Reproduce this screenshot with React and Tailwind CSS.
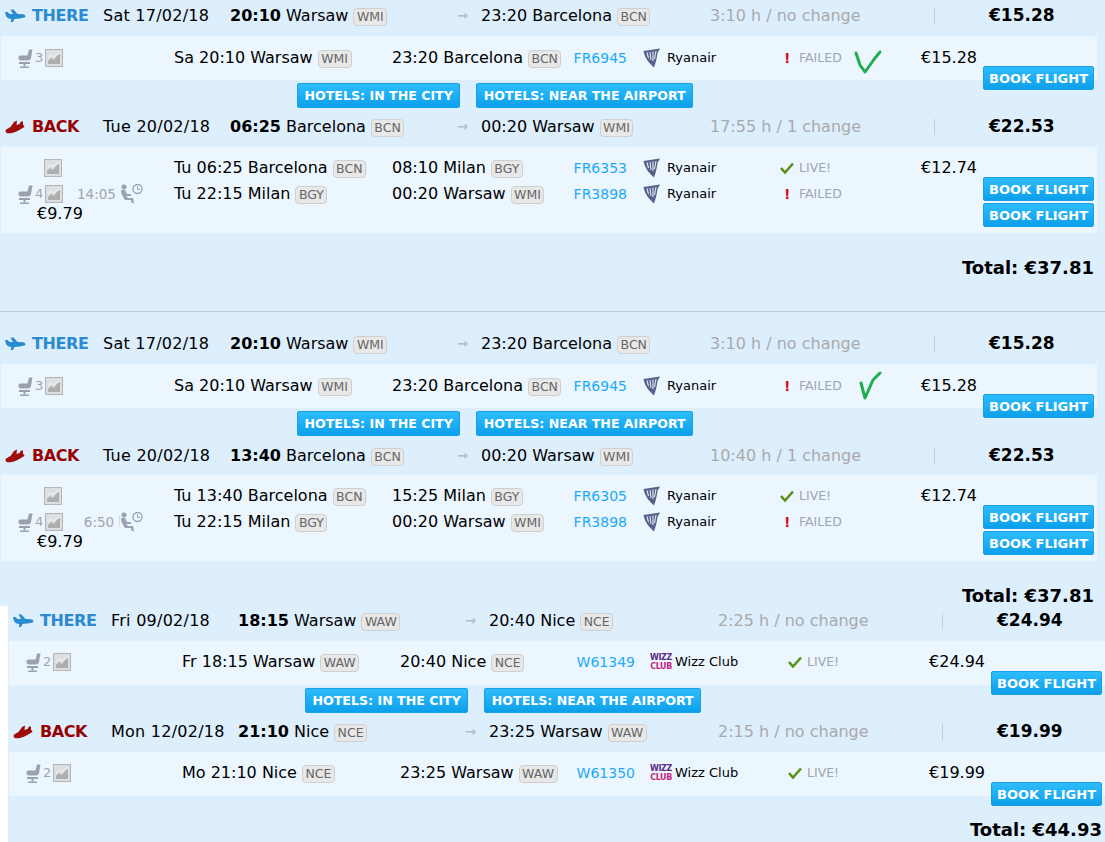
import React from 'react';

const PlaneIcon = ({ back }) => (
  <svg width="21" height="14" viewBox="0 0 21 14" className="shrink-0">
    {back ? (
      <path d="M0.5 11.5 C0.5 9 3 8.5 5.5 7 L9 2 L12 0.5 L11.5 5 L14.5 4 L16 1.5 L18 1.5 L18 5 C19.5 5.5 20 7 18.5 7.5 C15 10 10 12.5 7 13 C4 13.5 1 13.5 0.5 11.5 Z" fill="#a00d0d" />
    ) : (
      <path d="M0 3 L2.5 3 L4.5 5 L8 5 L5.5 0.5 L8.5 0.5 L12.5 5 L18 5.2 C20.5 5.5 21 8 19.5 8.6 C17 9.6 12 9.6 9.5 10 L8 13 L5.8 13 L6.3 10 C4 10 2 9 1 7 Z" fill="#2a8bd0" />
    )}
  </svg>
);

const SeatIcon = () => (
  <svg width="15" height="19" viewBox="0 0 15 19" className="shrink-0">
    <path d="M11 0.5 L14.5 0.5 L13 9 C12.8 10.5 11.5 11.5 10 11.5 L3 11.5 C1 11.5 0.5 10 0.5 8.5 C0.5 7 1.5 6.5 3 6.5 L9.5 6.5 Z" fill="#9aa3ad" />
    <rect x="1" y="13" width="11" height="2" fill="#9aa3ad" />
    <rect x="5.5" y="15" width="2" height="2.5" fill="#9aa3ad" />
    <rect x="2" y="17.5" width="9" height="1.5" fill="#9aa3ad" />
  </svg>
);

const ChartIcon = () => (
  <svg width="18" height="18" viewBox="0 0 18 18" className="shrink-0">
    <rect x="0.5" y="0.5" width="17" height="17" fill="#dcdfe2" stroke="#b5b5b5" />
    <path d="M3 12 L6 9 L9 11 L12 7 L15 5 L15 15 L3 15 Z" fill="#aeaeae" />
    <path d="M3 9 L6 6 L9 8 L12 5 L15 3" fill="none" stroke="#f2f4f6" />
  </svg>
);

const LayoverIcon = () => (
  <svg width="24" height="20" viewBox="0 0 24 20" className="shrink-0 bg-[#ebf6ff]">
    <circle cx="4" cy="3" r="2.5" fill="#9aa3ad" />
    <path d="M1 6 L5 6 L7 10 L11 10 L11 12 L6 12 L8 14 L13 14 L14 19 L11.5 19 L11 16 L5 16 L1.5 10 Z" fill="#9aa3ad" />
    <circle cx="17.5" cy="5" r="4.5" fill="none" stroke="#9aa3ad" strokeWidth="1.3" />
    <path d="M17.5 2.5 L17.5 5.5 L20 5.5" fill="none" stroke="#9aa3ad" />
  </svg>
);

const RyanairLogo = () => (
  <svg width="18" height="20" viewBox="0 0 18 20" className="shrink-0">
    <path d="M0.5 3 L17 0.5 L14.5 5 C14 10 12.5 15 11 19.5 C7 16 2 11 0.5 3 Z" fill="#55628a" />
    <path d="M4 4.5 L5.5 10 M7 4 L8 12 M10 3.5 L10 13 M13 3 L11.5 11" stroke="#e3e9f4" strokeWidth="1.1" fill="none" />
  </svg>
);

const WizzLogo = () => (
  <div className="flex w-[20px] shrink-0 flex-col items-center text-[8px] leading-[9px] font-bold tracking-[-0.4px]">
    <span className="text-[#5b2a82]">WIZZ</span>
    <span className="text-[#c6257e]">CLUB</span>
  </div>
);

const Badge = ({ children }) => (
  <span className="ml-[5px] inline-block rounded-[4px] border border-[#cfcfcf] bg-[#e8e8e8] px-[2.5px] text-[12.5px] leading-[16px] text-[#666]">
    {children}
  </span>
);

const HeaderRow = ({ back, date, time, from, fromCode, to, toCode, duration, price, height }) => (
  <div className={`flex items-center whitespace-nowrap text-[16px] text-black ${height}`}>
    <div className="flex w-[32px] shrink-0 pl-[5px]">
      <PlaneIcon back={back} />
    </div>
    <div className={`w-[71px] shrink-0 font-bold tracking-[-0.4px] ${back ? 'text-[#990000]' : 'text-[#2a8bd0]'}`}>
      {back ? 'BACK' : 'THERE'}
    </div>
    <div className="w-[127px] shrink-0 tracking-[0.25px]">{date}</div>
    <div className="w-[227px] shrink-0">
      <span className="font-bold">{time}</span> {from}
      <Badge>{fromCode}</Badge>
    </div>
    <div className="w-[24px] shrink-0 text-[13px] font-bold text-[#b4bec8]">→</div>
    <div className="w-[229px] shrink-0">
      {to}
      <Badge>{toCode}</Badge>
    </div>
    <div className="w-[224px] shrink-0 text-[#aaa]">{duration}</div>
    <div className="h-[16px] w-[55px] shrink-0 border-l border-[#c5cdd4]" />
    <div className="text-[17px] font-bold">{price}</div>
  </div>
);

const Status = ({ live }) => (
  <div className="flex w-[76px] shrink-0 items-center text-[12.5px] text-[#a0a6ad]">
    <div className="flex w-[19px] shrink-0">
      {live ? (
        <svg width="14" height="12" viewBox="0 0 14 12">
          <path d="M1 6 L5 10.5 L13 1.5" fill="none" stroke="#5a9216" strokeWidth="2.6" />
        </svg>
      ) : (
        <span className="pl-[4px] text-[14px] leading-none font-bold text-[#d01030]">!</span>
      )}
    </div>
    {live ? 'LIVE!' : 'FAILED'}
  </div>
);

const HandCheck = ({ path }) => (
  <svg width="34" height="34" viewBox="0 0 34 34" className="absolute top-[6px] left-[852px]">
    <path d={path} fill="none" stroke="#1fad4e" strokeWidth="3" strokeLinecap="round" strokeLinejoin="round" />
  </svg>
);

const Leg = ({ dep, depCode, arr, arrCode, flight, carrier, live, price }) => (
  <div className="flex h-[26px] items-center whitespace-nowrap text-[16px] text-black">
    <div className="w-[218px] shrink-0">
      {dep}
      <Badge>{depCode}</Badge>
    </div>
    <div className="w-[171px] shrink-0">
      {arr}
      <Badge>{arrCode}</Badge>
    </div>
    <div className="w-[80px] shrink-0 pr-[16px] text-right text-[14px] text-[#1eaaf5]">{flight}</div>
    <div className="w-[24px] shrink-0">{carrier === 'Ryanair' ? <RyanairLogo /> : <WizzLogo />}</div>
    <div className="w-[113px] shrink-0 text-[13px]">{carrier}</div>
    <Status live={live} />
    <div className="w-[121px] shrink-0 text-right">{price}</div>
  </div>
);

const BookButton = () => (
  <div className="flex h-[24px] w-[111px] shrink-0 items-center justify-center rounded-[2px] border border-[#17a0e6] bg-gradient-to-b from-[#2dbcfb] to-[#0aa0ea] pt-[1px] text-[13px] font-bold text-white">
    BOOK FLIGHT
  </div>
);

const HotelButton = ({ children }) => (
  <div className="flex h-[25px] items-center rounded-[2px] border border-[#17a0e6] bg-gradient-to-b from-[#2dbcfb] to-[#0aa0ea] px-[6.5px] pt-[1px] text-[12.6px] font-bold whitespace-nowrap text-white">
    {children}
  </div>
);

const Card = ({ legs, layover, seats, check, cardHeight, legPad = 'pt-[8px]' }) => {
  const double = legs.length > 1;
  return (
    <div className={`relative ml-px flex w-[1096px] bg-[#ebf6ff] ${cardHeight}`}>
      <div className={`w-[173px] shrink-0 text-[13px] text-[#a0a6ad] ${legPad}`}>
        {double && (
          <div className="flex h-[26px] items-center pl-[43px]">
            <ChartIcon />
          </div>
        )}
        <div className="flex h-[26px] items-center pl-[17px]">
          <SeatIcon />
          <span className="ml-[2px] w-[10px]">{seats}</span>
          <ChartIcon />
          {layover && (
            <>
              <div className="ml-[14px] w-[50px] shrink-0 text-right text-[13.5px] whitespace-nowrap">{layover}</div>
              <div className="-ml-[7px]">
                <LayoverIcon />
              </div>
            </>
          )}
        </div>
        {double && <div className="-mt-[2px] pl-[36px] text-[16px] leading-[18px] text-black">€9.79</div>}
      </div>
      <div className={`w-[809px] shrink-0 ${legPad}`}>
        {legs.map((leg) => (
          <Leg key={leg.flight} {...leg} />
        ))}
      </div>
      <div className="flex flex-col gap-[2px] pt-[30px]">
        {legs.map((leg) => (
          <BookButton key={leg.flight} />
        ))}
      </div>
      {check && <HandCheck path={check} />}
    </div>
  );
};

const Hotels = () => (
  <div className="flex h-[31px] gap-[16px] pt-[3px] pl-[297px]">
    <HotelButton>HOTELS: IN THE CITY</HotelButton>
    <HotelButton>HOTELS: NEAR THE AIRPORT</HotelButton>
  </div>
);

const Total = ({ value, className }) => (
  <div className={`pr-[11px] text-right text-[18px] font-bold whitespace-nowrap text-black ${className}`}>
    Total: {value}
  </div>
);

const ryanairThere = {
  dep: 'Sa 20:10 Warsaw',
  depCode: 'WMI',
  arr: '23:20 Barcelona',
  arrCode: 'BCN',
  flight: 'FR6945',
  carrier: 'Ryanair',
  live: false,
  price: '€15.28',
};

const lastLeg = {
  dep: 'Tu 22:15 Milan',
  depCode: 'BGY',
  arr: '00:20 Warsaw',
  arrCode: 'WMI',
  flight: 'FR3898',
  carrier: 'Ryanair',
  live: false,
};

const Result = ({ top, backHeight, backTime, backDuration, firstBack, layover, check }) => (
  <div>
    <HeaderRow date="Sat 17/02/18" time="20:10" from="Warsaw" fromCode="WMI" to="23:20 Barcelona" toCode="BCN" duration="3:10 h / no change" price="€15.28" height={top} />
    <Card legs={[ryanairThere]} seats="3" check={check} cardHeight="h-[44px]" legPad="pt-[9px]" />
    <Hotels />
    <HeaderRow back date="Tue 20/02/18" time={backTime} from="Barcelona" fromCode="BCN" to="00:20 Warsaw" toCode="WMI" duration={backDuration} price="€22.53" height={backHeight} />
    <Card legs={[firstBack, lastLeg]} seats="4" layover={layover} cardHeight="h-[86px]" />
  </div>
);

export default function App() {
  return (
    <div className="h-[842px] w-[1105px] overflow-hidden bg-white font-['DejaVu_Sans',sans-serif]">
      <div className="h-[606px] bg-[#ddeefd]">
        <div className="h-[312px] border-b border-[#c3ccd4]">
          <Result
            top="h-[36px] pb-[4px]"
            backHeight="h-[36px] pb-[4px]"
            backTime="06:25"
            backDuration="17:55 h / 1 change"
            layover="14:05 h"
            check="M3 11 L7 23 L12 30 L22 16 L27 10"
            firstBack={{ dep: 'Tu 06:25 Barcelona', depCode: 'BCN', arr: '08:10 Milan', arrCode: 'BGY', flight: 'FR6353', carrier: 'Ryanair', live: true, price: '€12.74' }}
          />
          <Total value="€37.81" className="pt-[21px]" />
        </div>
        <Result
          top="h-[52px] pt-[12px]"
          backHeight="h-[36px] pb-[2px]"
          backTime="13:40"
          backDuration="10:40 h / 1 change"
          layover="6:50 h"
          check="M8 13 L12 28 L20 10 L27 3"
          firstBack={{ dep: 'Tu 13:40 Barcelona', depCode: 'BCN', arr: '15:25 Milan', arrCode: 'BGY', flight: 'FR6305', carrier: 'Ryanair', live: true, price: '€12.74' }}
        />
        <Total value="€37.81" className="pt-[21px]" />
      </div>
      <div className="ml-[8px] h-[236px] w-[1105px] bg-[#ddeefd]">
        <HeaderRow date="Fri 09/02/18" time="18:15" from="Warsaw" fromCode="WAW" to="20:40 Nice" toCode="NCE" duration="2:25 h / no change" price="€24.94" height="h-[35px] pb-[6px]" />
        <Card
          legs={[{ dep: 'Fr 18:15 Warsaw', depCode: 'WAW', arr: '20:40 Nice', arrCode: 'NCE', flight: 'W61349', carrier: 'Wizz Club', live: true, price: '€24.94' }]}
          seats="2"
          cardHeight="h-[44px]"
        />
        <Hotels />
        <HeaderRow back date="Mon 12/02/18" time="21:10" from="Nice" fromCode="NCE" to="23:25 Warsaw" toCode="WAW" duration="2:15 h / no change" price="€19.99" height="h-[36px] pb-[4px]" />
        <Card
          legs={[{ dep: 'Mo 21:10 Nice', depCode: 'NCE', arr: '23:25 Warsaw', arrCode: 'WAW', flight: 'W61350', carrier: 'Wizz Club', live: true, price: '€19.99' }]}
          seats="2"
          cardHeight="h-[44px]"
        />
        <Total value="€44.93" className="pt-[20px]" />
      </div>
    </div>
  );
}
